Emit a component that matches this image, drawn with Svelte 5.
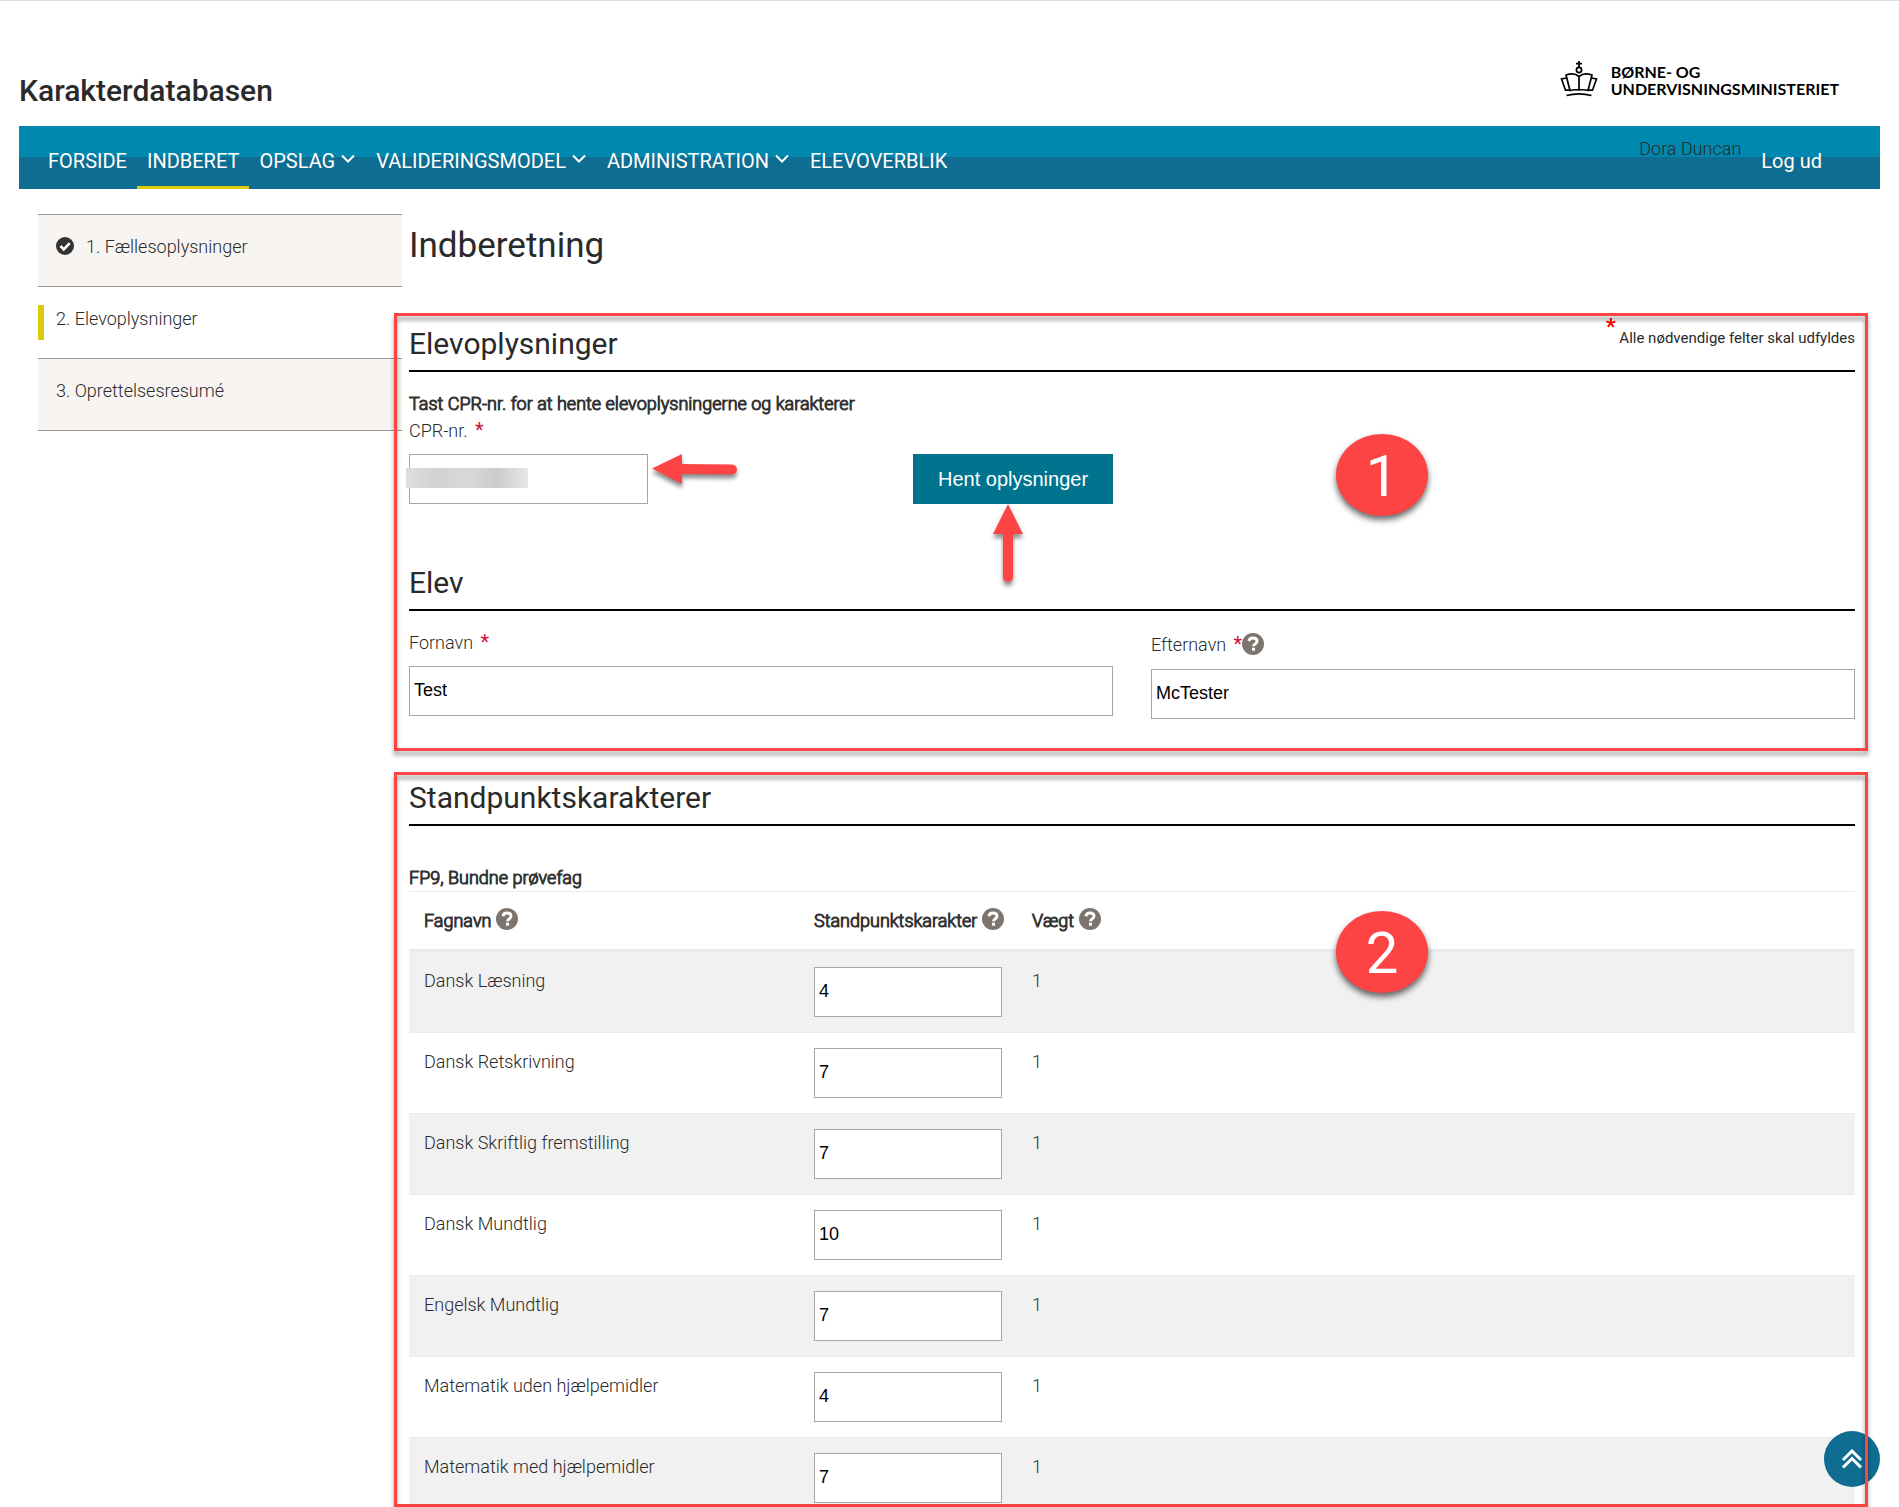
<script>
	const menu = [
		{ label: 'FORSIDE' },
		{ label: 'INDBERET', active: true },
		{ label: 'OPSLAG', sub: true },
		{ label: 'VALIDERINGSMODEL', sub: true },
		{ label: 'ADMINISTRATION', sub: true },
		{ label: 'ELEVOVERBLIK' }
	];

	const steps = [
		{ label: '1. Fællesoplysninger', done: true },
		{ label: '2. Elevoplysninger', active: true },
		{ label: '3. Oprettelsesresumé' }
	];

	let firstName = $state('Test');
	let lastName = $state('McTester');
	let cpr = $state('');

	let subjects = $state([
		{ name: 'Dansk Læsning', grade: '4', weight: 1 },
		{ name: 'Dansk Retskrivning', grade: '7', weight: 1 },
		{ name: 'Dansk Skriftlig fremstilling', grade: '7', weight: 1 },
		{ name: 'Dansk Mundtlig', grade: '10', weight: 1 },
		{ name: 'Engelsk Mundtlig', grade: '7', weight: 1 },
		{ name: 'Matematik uden hjælpemidler', grade: '4', weight: 1 },
		{ name: 'Matematik med hjælpemidler', grade: '7', weight: 1 }
	]);
</script>

{#snippet help()}
	<button class="help" type="button" aria-label="Hjælp">
		<svg viewBox="0 0 22 22" width="22" height="22">
			<circle cx="11" cy="11" r="11" fill="#7d746d" />
			<path d="M7 8.200C7.300 6 9 5 11 5c2.300 0 4 1.200 4 3.200 0 2.800-3.500 2.700-3.500 5" fill="none" stroke="#fff" stroke-width="2.900" />
			<rect x="10" y="14.700" width="3" height="3" fill="#fff" />
		</svg>
	</button>
{/snippet}

<div class="page">
	<header>
		<div class="site">Karakterdatabasen</div>
		<div class="logo">
			<svg viewBox="0 0 38 36" width="38" height="36" fill="none" stroke="#000" stroke-width="1.700">
				<path d="M19 0v6M16 2.700h6" />
				<circle cx="19" cy="9" r="2.600" />
				<path d="M19 15.500v13.500M19 15.500c-3.500-3-8.500-3-13-1.500l4 15.500c3-.9 6-.9 9-.5 3-.4 6-.4 9 .5l4-15.500c-4.500-1.500-9.500-1.500-13 1.500z" />
				<path d="M6.500 17l-5 1L5.500 29.200h4.500M31.500 17l5 1L32.500 29.200h-4.500M6.500 34.500c8-2 17-2 25 0" />
			</svg>
			<div>BØRNE- OG<br />UNDERVISNINGSMINISTERIET</div>
		</div>
	</header>

	<nav>
		{#each menu as item}
			<a href="#top" class:active={item.active}>
				{item.label}
				{#if item.sub}
					<svg viewBox="0 0 16 10" width="16" height="10">
						<path d="M2 1.500l6 6 6-6" fill="none" stroke="#fff" stroke-width="2" />
					</svg>
				{/if}
			</a>
		{/each}
		<span class="user">Dora Duncan</span>
		<a href="#logout">Log ud</a>
	</nav>

	<div class="body">
		<aside>
			<ul>
				{#each steps as step}
					<li class:current={step.active}>
						<a href="#step">
							{#if step.done}
								<svg viewBox="0 0 18 18" width="18" height="18">
									<circle cx="9" cy="9" r="9" fill="#333" />
									<path d="M4.500 9l3.200 3.300 6-6.200" fill="none" stroke="#fff" stroke-width="2.600" />
								</svg>
							{/if}
							{step.label}
						</a>
					</li>
				{/each}
			</ul>
		</aside>

		<main>
			<h1>Indberetning</h1>

			<section class="student">
				<div class="heading">
					<h2>Elevoplysninger</h2>
					<p class="note"><span>*</span> Alle nødvendige felter skal udfyldes</p>
				</div>
				<p class="lead">Tast CPR-nr. for at hente elevoplysningerne og karakterer</p>
				<div class="columns">
					<div>
						<label for="cpr">CPR-nr. <span class="req">*</span></label>
						<div class="lookup">
							<input id="cpr" type="text" bind:value={cpr} />
							<button class="fetch" type="button">Hent oplysninger</button>
							<div class="redacted"></div>
							<svg class="arrow left" viewBox="0 0 86 30" width="86" height="30">
								<path d="M0 14.500L30 0v30z" fill="#fd4444" />
								<path d="M28 15l52 .5" stroke="#fd4444" stroke-width="10" stroke-linecap="round" />
							</svg>
							<svg class="arrow up" viewBox="0 0 30 78" width="30" height="78">
								<path d="M15 0l15 30H0z" fill="#fd4444" />
								<path d="M15 28v45" stroke="#fd4444" stroke-width="10" stroke-linecap="round" />
							</svg>
						</div>
					</div>
				</div>

				<h2 class="sub">Elev</h2>
				<div class="columns names">
					<div>
						<label for="first">Fornavn <span class="req">*</span></label>
						<input id="first" type="text" bind:value={firstName} />
					</div>
					<div>
						<div class="with-help">
							<label for="last">Efternavn <span class="req">*</span></label>{@render help()}
						</div>
						<input id="last" type="text" bind:value={lastName} />
					</div>
				</div>
				<div class="frame"></div>
				<div class="number one">1</div>
			</section>

			<section class="grades">
				<h2>Standpunktskarakterer</h2>
				<h3 id="fp9">FP9, Bundne prøvefag</h3>
				<table aria-labelledby="fp9">
					<thead>
						<tr>
							<th class="subject">Fagnavn {@render help()}</th>
							<th class="grade">Standpunktskarakter {@render help()}</th>
							<th>Vægt {@render help()}</th>
						</tr>
					</thead>
					<tbody>
						{#each subjects as subject}
							<tr>
								<td>{subject.name}</td>
								<td><input type="text" aria-label={subject.name} bind:value={subject.grade} /></td>
								<td>{subject.weight}</td>
							</tr>
						{/each}
					</tbody>
				</table>
				<div class="frame"></div>
				<div class="number two">2</div>
			</section>
		</main>
	</div>

	<a class="to-top" href="#top" aria-label="Til toppen">
		<svg viewBox="0 0 22 20" width="22" height="20">
			<path d="M2 11l9-9 9 9M2 18.500l9-9 9 9" fill="none" stroke="#fff" stroke-width="3" />
		</svg>
	</a>
</div>

<style>
	:global(body) {
		background: #fff;
	}

	.page {
		display: flex;
		flex-direction: column;
		box-sizing: border-box;
		height: 100vh;
		overflow: hidden;
		border-top: 1px solid #ddd;
		font-family: Roboto, 'Liberation Sans', sans-serif;
		font-size: 18px;
		font-weight: 350;
		line-height: 27px;
		color: #2a2a2a;
	}

	header {
		display: flex;
		flex-shrink: 0;
		justify-content: space-between;
		align-items: flex-end;
		box-sizing: border-box;
		height: 125px;
		padding: 0 60px 17px 19px;
	}

	.site {
		font-size: 30px;
		font-weight: 500;
		line-height: 36px;
	}

	.logo {
		display: flex;
		align-items: flex-end;
		gap: 13px;
		margin-bottom: 12px;
		font: 700 16px/17px Lato, sans-serif;
		color: #000;
	}

	nav {
		display: flex;
		flex-shrink: 0;
		height: 63px;
		box-sizing: border-box;
		margin: 0 19px;
		padding: 0 48px 0 19px;
		background: linear-gradient(#0088ae 50%, #0e6d90 50%);
	}

	nav a {
		padding: 22px 10px 0;
		border-bottom: 3px solid transparent;
		font-size: 20px;
		font-weight: 400;
		color: #fff;
		text-decoration: none;
	}

	nav a.active {
		border-bottom-color: #dccb0a;
	}

	nav svg {
		margin-bottom: 4px;
	}

	.user {
		margin-left: auto;
		padding: 9px 10px 0;
	}

	.body {
		display: flex;
		flex: 1;
		min-height: 0;
		padding: 0 44px 0 38px;
	}

	aside {
		width: 364px;
		flex-shrink: 0;
		padding-top: 25px;
	}

	ul {
		margin: 0;
		padding: 0;
		border-bottom: 1px solid #999;
		list-style: none;
	}

	li {
		box-sizing: border-box;
		height: 72px;
		padding-top: 18px;
		border-top: 1px solid #999;
		background: #f7f4f1;
	}

	li a {
		display: flex;
		gap: 12px;
		height: 35px;
		padding-left: 12px;
		border-left: 6px solid transparent;
		color: #2a2a2a;
		text-decoration: none;
	}

	li svg {
		margin-top: 4px;
	}

	li.current {
		background: #fff;
	}

	li.current a {
		border-left-color: #dccb0a;
	}

	main {
		display: flex;
		flex: 1;
		flex-direction: column;
		margin-left: 7px;
		padding-top: 36px;
	}

	h1,
	h2,
	h3,
	p {
		margin: 0;
	}

	h1 {
		margin-bottom: 46px;
		font-size: 35px;
		font-weight: 400;
		line-height: 42px;
	}

	h2 {
		padding-bottom: 8px;
		border-bottom: 2px solid #000;
		font-size: 30px;
		font-weight: 400;
		line-height: 36px;
	}

	/* light face thickened, keeps the narrow widths of the body text */
	h3,
	.lead,
	th {
		font-size: 18px;
		font-weight: 300;
		-webkit-text-stroke: 1px #333;
	}

	section {
		position: relative;
	}

	.student {
		padding: 13px 0 32px;
		margin-bottom: 21px;
	}

	.heading {
		display: flex;
		justify-content: space-between;
		border-bottom: 2px solid #000;
	}

	.heading h2 {
		border-bottom: 0;
	}

	.note {
		font-size: 15px;
		font-weight: 400;
		line-height: 18px;
	}

	.note span {
		font-size: 22px;
		font-weight: 700;
		vertical-align: 9px;
		line-height: 2px;
		color: #f00;
	}

	.lead {
		margin-top: 18px;
	}

	.columns {
		display: grid;
		grid-template-columns: 1fr 1fr;
		gap: 38px;
	}

	label {
		display: block;
	}

	.req {
		margin-left: 3px;
		color: #d0103a;
		font-size: 20px;
		font-weight: 400;
		line-height: 20px;
	}

	input {
		display: block;
		box-sizing: border-box;
		width: 100%;
		height: 50px;
		padding: 0 4px 2px;
		border: 1px solid #a6a6a6;
		border-radius: 0;
		background: #fff;
		font: 18px 'Liberation Sans', Arial, sans-serif;
		color: #000;
	}

	.lookup {
		position: relative;
		display: flex;
		justify-content: space-between;
		margin-top: 10px;
	}

	.lookup input {
		width: 239px;
	}

	.fetch {
		width: 200px;
		height: 50px;
		border: 0;
		background: #00738f;
		font: 20px 'Liberation Sans', Arial, sans-serif;
		color: #fff;
	}

	.redacted {
		position: absolute;
		top: 14px;
		left: -3px;
		width: 122px;
		height: 20px;
		background: linear-gradient(90deg, #dedede, #d2d2d2 25%, #d8d8da 50%, #cacccb 75%, #e6e7e9);
	}

	.arrow {
		position: absolute;
		overflow: visible;
		filter: drop-shadow(0 4px 2px rgb(0 0 0 / 45%));
	}

	.arrow.left {
		top: 0;
		left: 243px;
	}

	.arrow.up {
		top: 50px;
		right: 90px;
	}

	.sub {
		margin-top: 61px;
	}

	.names {
		margin-top: 18px;
	}

	.names input {
		margin-top: 10px;
	}

	.with-help {
		display: flex;
		align-items: center;
		height: 30px;
	}

	.help {
		padding: 0;
		border: 0;
		background: none;
		line-height: 22px;
		vertical-align: -3px;
	}

	.help svg {
		display: block;
	}

	.grades {
		flex: 1;
		min-height: 0;
		padding-top: 8px;
		box-sizing: border-box;
	}

	h3 {
		margin-top: 38px;
	}

	table {
		width: 100%;
		table-layout: fixed;
		border-spacing: 0;
	}

	th {
		height: 27px;
		padding: 15px;
		border-top: 1px solid #e9ecef;
		border-bottom: 2px solid #e9ecef;
		text-align: left;
		line-height: 27px;
	}

	.subject {
		width: 360px;
	}

	.grade {
		width: 188px;
		white-space: nowrap;
	}

	td {
		padding: 15px;
		border-top: 1px solid #eaebed;
		vertical-align: top;
	}

	tbody tr:nth-child(odd) {
		background: #f1f1f1;
	}

	.frame {
		position: absolute;
		z-index: 2;
		inset: 0 -13px 0 -15px;
		border: 3px solid #fd4444;
		pointer-events: none;
		filter: drop-shadow(0 4px 2px rgb(0 0 0 / 40%));
	}

	.number {
		position: absolute;
		left: 927px;
		width: 92px;
		height: 82px;
		border-radius: 50%;
		background: #fd4444;
		box-shadow: 0 4px 6px rgb(0 0 0 / 60%);
		font: 58px/84px Roboto, sans-serif;
		color: #fff;
		text-align: center;
	}

	.one {
		top: 121px;
	}

	.two {
		top: 139px;
	}

	.to-top {
		position: fixed;
		z-index: 1;
		right: 19px;
		bottom: 20px;
		display: flex;
		align-items: center;
		justify-content: center;
		width: 56px;
		height: 56px;
		border-radius: 50%;
		background: #0e6d90;
	}
</style>
